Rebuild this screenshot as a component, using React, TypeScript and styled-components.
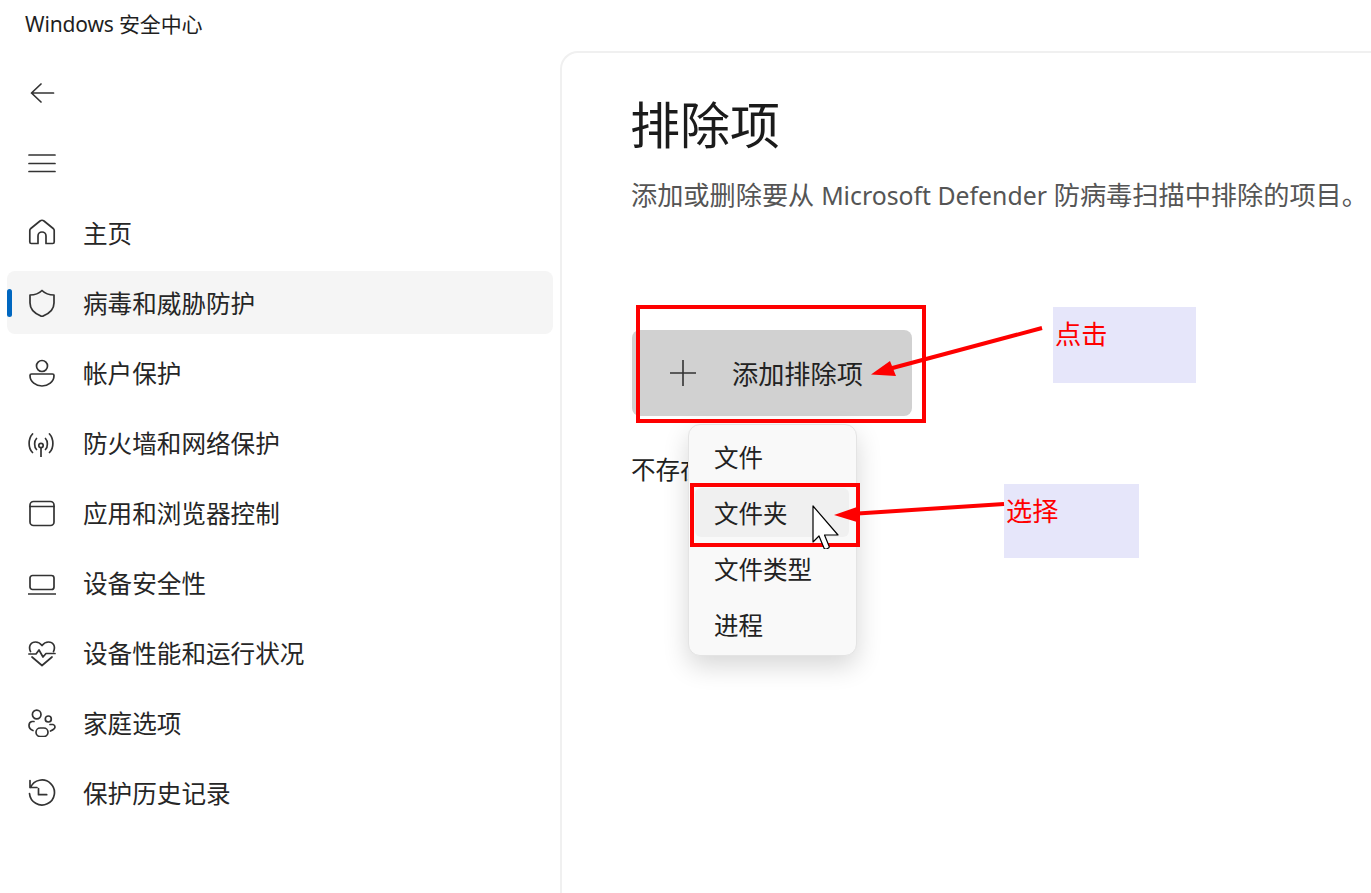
import React from "react";
import styled, { createGlobalStyle } from "styled-components";

const GlobalStyle = createGlobalStyle`
  html, body {
    margin: 0;
    padding: 0;
    background: #fff;
  }
  body {
    font-family: "Noto Sans", "Noto Sans CJK SC", sans-serif;
    color: #1b1b1b;
  }
`;

const navItems = [
  {
    label: "主页",
    icon: <path d="M1.8 23V11.5q0-1.2 1-2L12 2q2-1.5 4 0l9.2 7.5q1 .8 1 2V23q0 1.5-1.5 1.5H18V17a4 4 0 0 0-8 0v7.5H3.3q-1.5 0-1.5-1.5Z" />,
  },
  {
    label: "病毒和威胁防护",
    active: true,
    icon: <path d="M14 1.5C17 4.5 21 6 26 6v8c0 7-5 11-12 13.500C7 25 2 21 2 14V6c5 0 9-1.500 12-4.500Z" />,
  },
  {
    label: "帐户保护",
    icon: (
      <>
        <circle cx="14" cy="7" r="5.5" />
        <path d="M3.500 15h21q1.500 0 1.500 1.500C26 23 20 27 14 27S2 23 2 16.500q0-1.500 1.500-1.500Z" />
      </>
    ),
  },
  {
    label: "防火墙和网络保护",
    icon: (
      <>
        <circle cx="13" cy="16.500" r="2.200" />
        <path d="M13 19v9.500M4.500 5C0 10 0 19 4.500 23.500M8.500 9.500C6 12 6 18 8.500 20.500M21.500 5c4.500 5 4.500 14 0 18.500M17.500 9.500c2.500 2.500 2.500 8.500 0 11" />
      </>
    ),
  },
  {
    label: "应用和浏览器控制",
    icon: (
      <>
        <rect x="2" y="2.500" width="24" height="24" rx="3.500" />
        <path d="M2 7.500h24" />
      </>
    ),
  },
  {
    label: "设备安全性",
    icon: (
      <>
        <rect x="2" y="6.500" width="24" height="14" rx="2.500" />
        <path d="M.5 25h27" />
      </>
    ),
  },
  {
    label: "设备性能和运行状况",
    icon: <path d="M2.500 12.500C0 7 3 3 7.500 3c2.500 0 5 1.500 6.500 3.500C15.500 4.500 18 3 20.500 3c4.500 0 7.500 4 5 9.500M.8 15H8l3-4 4 7 3-3.500h9M4 18l10 8.500L24 18" />,
  },
  {
    label: "家庭选项",
    icon: (
      <>
        <circle cx="8.700" cy="5.500" r="4.300" />
        <circle cx="20.300" cy="10" r="3" />
        <rect x="8" y="19" width="12" height="8.500" rx="4.200" />
        <path d="M6 12.500H4q-3 .5-3 4t4 5M22 15.500h3q2 .5 2 2.500t-4.500 4" />
      </>
    ),
  },
  {
    label: "保护历史记录",
    icon: (
      <>
        <path d="M2 1.500v7h7M2.500 8.500A12.500 12.500 0 1 1 1.500 14.500" />
        <path d="M10.500 9.500v6.200h8.200" />
      </>
    ),
  },
];

const menuItems = ["文件", "文件夹", "文件类型", "进程"];

export default function App() {
  return (
    <Page>
      <GlobalStyle />
      <TitleBar>Windows 安全中心</TitleBar>
      <Body>
        <Sidebar>
          <NavRow>
            <NavIcon viewBox="0 0 28 28">
              <path d="M3.500 14h22M13 5l-9.500 9 9.500 9" />
            </NavIcon>
          </NavRow>
          <NavRow>
            <NavIcon viewBox="0 0 28 28">
              <path d="M1 6h26M1 14.500h26M1 22.500h26" />
            </NavIcon>
          </NavRow>
          {navItems.map((item) => (
            <NavRow key={item.label} $active={item.active}>
              <NavIcon viewBox="0 0 28 28">{item.icon}</NavIcon>
              <NavLabel>{item.label}</NavLabel>
            </NavRow>
          ))}
        </Sidebar>
        <Main>
          <Heading>排除项</Heading>
          <Description>
            添加或删除要从 <Latin>Microsoft Defender</Latin> 防病毒扫描中排除的项目。
          </Description>
          <AddArea>
            <AddButton>
              <PlusIcon viewBox="0 0 28 28">
                <path d="M14 1v26M1 14h26" />
              </PlusIcon>
              添加排除项
            </AddButton>
            <Menu>
              {menuItems.map((name) => (
                <MenuItem key={name} $hover={name === "文件夹"}>
                  {name}
                </MenuItem>
              ))}
            </Menu>
          </AddArea>
          <EmptyText>不存在排除项</EmptyText>
        </Main>
      </Body>

      <ClickFrame />
      <SelectFrame />
      <ClickNote>点击</ClickNote>
      <SelectNote>选择</SelectNote>
      <Arrows viewBox="0 0 1371 893">
        <line x1="1042" y1="328" x2="885" y2="370" />
        <polygon points="871,374.500 890,361 896,376" />
        <line x1="1004" y1="504" x2="850" y2="514" />
        <polygon points="834,515 857,507 857,522" />
      </Arrows>
      <Cursor viewBox="0 0 28 44">
        <path d="M1 1v36l6-6 5 12q.5 1.500 2.500 1l2-1q1-.5.5-2l-4.500-11H26Z" />
      </Cursor>
    </Page>
  );
}

const Page = styled.div`
  position: relative;
  display: flex;
  flex-direction: column;
  width: 1371px;
  height: 893px;
  overflow: hidden;
`;

const TitleBar = styled.div`
  display: flex;
  align-items: center;
  flex: 0 0 51px;
  height: 51px;
  padding: 0 0 6px 25px;
  box-sizing: border-box;
  font-size: 21px;
  letter-spacing: -0.15px;
  color: #1f1f1f;
`;

const Body = styled.div`
  display: flex;
  flex: 1;
  min-height: 0;
`;

const Sidebar = styled.nav`
  display: flex;
  flex-direction: column;
  flex: 0 0 560px;
  box-sizing: border-box;
  gap: 7px;
  padding: 10px 7px 0 7px;
`;

const NavRow = styled.div<{ $active?: boolean }>`
  position: relative;
  display: flex;
  align-items: center;
  flex: 0 0 63px;
  gap: 27px;
  padding-left: 21px;
  border-radius: 8px;
  background: ${(p) => (p.$active ? "#f5f5f5" : "transparent")};

  ${(p) =>
    p.$active &&
    `
    &::before {
      content: "";
      position: absolute;
      left: 0;
      top: 18px;
      width: 5px;
      height: 28px;
      border-radius: 3px;
      background: #0067c0;
    }
  `}
`;

const NavIcon = styled.svg`
  flex: 0 0 28px;
  width: 28px;
  height: 28px;
  fill: none;
  stroke: #333;
  stroke-width: 1.7;
  stroke-linecap: round;
  stroke-linejoin: round;
`;

const NavLabel = styled.span`
  font-size: 24.6px;
  line-height: 34px;
  color: #262626;
  padding-top: 3px;
`;

const Main = styled.main`
  flex: 1;
  box-sizing: border-box;
  padding: 34px 0 0 68px;
  border-top: 2px solid #f0f0f0;
  border-left: 2px solid #f0f0f0;
  border-top-left-radius: 18px;
  white-space: nowrap;
`;

const Heading = styled.h1`
  margin: 0;
  font-size: 50px;
  line-height: 76px;
  font-weight: 400;
  color: #1b1b1b;
`;

const Description = styled.p`
  margin: 15px 0 0 1px;
  font-size: 26.2px;
  line-height: 34px;
  color: #555;
`;

const Latin = styled.span`
  font-size: 24.8px;
`;

const AddArea = styled.div`
  position: relative;
  margin: 118px 0 0 2px;
  width: 280px;
`;

const AddButton = styled.div`
  display: flex;
  align-items: center;
  box-sizing: border-box;
  width: 280px;
  height: 86px;
  padding-left: 37px;
  gap: 35px;
  border-radius: 8px;
  background: #d1d1d1;
  font-size: 26.2px;
  color: #222;
`;

const PlusIcon = styled.svg`
  flex: 0 0 28px;
  width: 28px;
  height: 28px;
  fill: none;
  stroke: #333;
  stroke-width: 1.6;
`;

const Menu = styled.div`
  position: absolute;
  left: 56px;
  top: 94px;
  z-index: 1;
  box-sizing: border-box;
  width: 169px;
  height: 232px;
  padding: 7px 7px 0 6px;
  border: 1px solid #e4e4e4;
  border-radius: 12px;
  background: #f9f9f9;
  box-shadow: 0 10px 26px rgba(0, 0, 0, 0.16);
`;

const MenuItem = styled.div<{ $hover?: boolean }>`
  display: flex;
  align-items: center;
  height: 49px;
  margin-bottom: 7px;
  padding-left: 19px;
  border-radius: 6px;
  font-size: 24.5px;
  color: #222;
  background: ${(p) => (p.$hover ? "#f0f0f0" : "transparent")};
`;

const EmptyText = styled.p`
  margin: 36px 0 0 1px;
  font-size: 24.5px;
  line-height: 36px;
  color: #222;
`;

const ClickFrame = styled.div`
  position: absolute;
  left: 636px;
  top: 305px;
  width: 290px;
  height: 118px;
  box-sizing: border-box;
  border: 4px solid #fe0000;
  z-index: 2;
`;

const SelectFrame = styled.div`
  position: absolute;
  left: 690px;
  top: 483px;
  width: 170px;
  height: 64px;
  box-sizing: border-box;
  border: 4px solid #fe0000;
  z-index: 2;
`;

const ClickNote = styled.div`
  position: absolute;
  left: 1053px;
  top: 307px;
  width: 143px;
  height: 76px;
  box-sizing: border-box;
  padding: 10px 0 0 2px;
  background: #e6e6fa;
  color: #ff0000;
  font-size: 26.2px;
  line-height: 34px;
`;

const SelectNote = styled.div`
  position: absolute;
  left: 1004px;
  top: 484px;
  width: 135px;
  height: 74px;
  box-sizing: border-box;
  padding: 10px 0 0 2px;
  background: #e6e6fa;
  color: #ff0000;
  font-size: 26.2px;
  line-height: 34px;
`;

const Arrows = styled.svg`
  position: absolute;
  left: 0;
  top: 0;
  width: 1371px;
  height: 893px;
  z-index: 3;
  pointer-events: none;

  line {
    stroke: #fe0000;
    stroke-width: 4;
  }
  polygon {
    fill: #fe0000;
  }
`;

const Cursor = styled.svg`
  position: absolute;
  left: 812px;
  top: 505px;
  width: 28px;
  height: 44px;
  z-index: 4;

  path {
    fill: #fff;
    stroke: #000;
    stroke-width: 1.2;
    stroke-linejoin: round;
  }
`;
